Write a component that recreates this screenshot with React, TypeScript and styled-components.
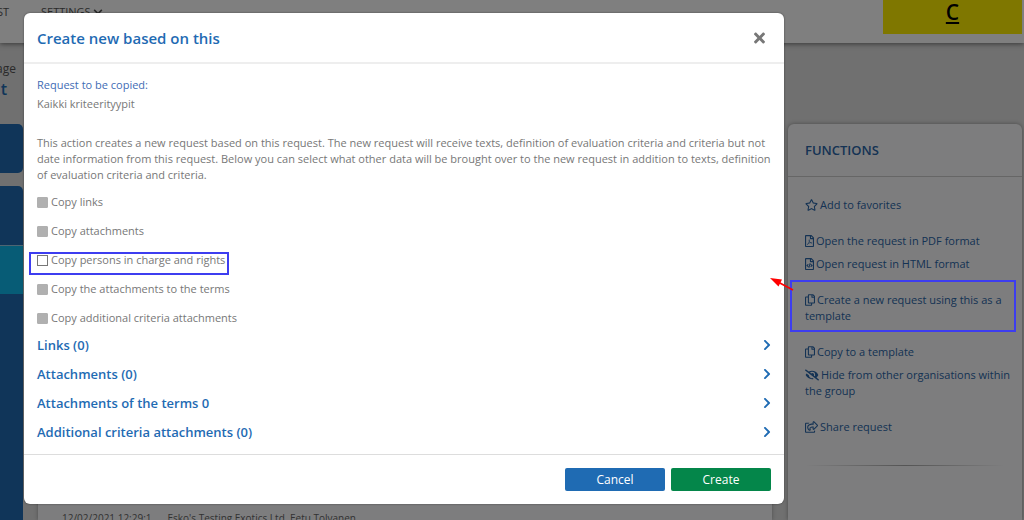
import React from 'react';
import styled, { createGlobalStyle } from 'styled-components';
import {
  FaRegStar,
  FaRegFilePdf,
  FaRegFileCode,
  FaRegCopy,
  FaEyeSlash,
  FaRegShareSquare,
  FaChevronRight,
  FaChevronDown,
  FaTimes,
} from 'react-icons/fa';

const GlobalStyle = createGlobalStyle`
  * { box-sizing: border-box; }
  body {
    margin: 0;
    background: #e0e0e0;
    font-family: "Open Sans", "Noto Sans", sans-serif;
    font-size: 11px;
    line-height: 16px;
    color: #777;
  }
  button, input { font: inherit; }
  a { color: inherit; text-decoration: none; }
  h1, h2, h3, p, ul { margin: 0; padding: 0; }
  ul { list-style: none; }
`;

const Page = styled.div`
  position: relative;
  height: 100vh;
  overflow: hidden;
  display: flex;
  flex-direction: column;
`;

const TopBar = styled.header`
  display: flex;
  justify-content: space-between;
  align-items: flex-start;
  flex: none;
  height: 43px;
  padding-right: 2px;
  background: #fff;
  box-shadow: 0 1px 5px rgba(0, 0, 0, 0.5);
`;

const Nav = styled.nav`
  display: flex;
  gap: 32px;
  padding-top: 4px;
  color: #555;
`;

const NavLink = styled.a`
  display: flex;
  align-items: center;
  gap: 2px;
`;

const ClippedLink = styled(NavLink)`
  width: 9px;
  justify-content: flex-end;
`;

const Logo = styled.a`
  width: 139px;
  height: 34px;
  background: #ffee00;
  color: #000;
  text-align: center;
  font-size: 21px;
  font-weight: 600;
  line-height: 24px;
  text-decoration: underline;
`;

const Columns = styled.div`
  display: flex;
  align-items: stretch;
  flex: 1;
  min-height: 0;
  padding-right: 2px;
`;

const Side = styled.aside`
  flex: none;
  width: 23px;
  display: flex;
  flex-direction: column;
  overflow: hidden;
`;

const SideHeading = styled.div`
  display: flex;
  flex-direction: column;
  align-items: flex-end;
  height: 81px;
  padding: 18px 7px 0 0;
  font-size: 12px;
  color: #555;
`;

const SideTitle = styled.strong`
  padding-right: 9px;
  font-size: 16px;
  font-weight: 600;
  line-height: 24px;
  color: #1f6bb3;
`;

const SideBox = styled.div`
  height: 49px;
  margin-bottom: 13px;
  border-radius: 0 5px 5px 0;
  background: #206bb3;
`;

const SideMenu = styled.div`
  flex: 1;
  border-radius: 0 5px 0 0;
  background: #206bb3;
  padding-top: 59px;
`;

const SideActive = styled.div`
  height: 49px;
  background: #0fb8ec;
  border-top: 1px solid #9ccbe4;
`;

const Main = styled.main`
  flex: 1;
  min-width: 0;
  display: flex;
  align-items: flex-end;
  margin: 0 16px 0 15px;
  padding: 0 24px;
  background: #fbfbfd;
  box-shadow: 0 0 4px rgba(0, 0, 0, 0.3);
`;

const LogRow = styled.div`
  display: flex;
  gap: 16px;
  height: 10px;
  font-size: 10px;
  color: #666;
`;

const Functions = styled.aside`
  flex: none;
  width: 234px;
  margin-top: 81px;
  border-radius: 6px 6px 0 0;
  background: #fbfbfd;
  box-shadow: 0 0 4px rgba(0, 0, 0, 0.35);
  color: #2a66a8;
`;

const FunctionsTitle = styled.h2`
  padding: 17px;
  height: 53px;
  font-size: 13px;
  font-weight: 600;
  line-height: 18px;
  border-bottom: 1px solid #ccc;
`;

const FunctionList = styled.ul`
  display: flex;
  flex-direction: column;
  gap: 7px;
  padding: 20px 8px 30px 17px;
`;

const FunctionItem = styled.li<{ $spaced?: boolean }>`
  position: relative;
  margin-bottom: ${(p) => (p.$spaced ? 13 : 0)}px;
`;

const FunctionIcon = styled.span<{ $width: number }>`
  margin-right: 2px;
  svg {
    width: ${(p) => p.$width}px;
    height: 12px;
    vertical-align: -2px;
  }
`;

const Separator = styled.hr`
  height: 1px;
  margin: 0 17px;
  border: 0;
  background: linear-gradient(to right, transparent, #aaa, transparent);
`;

const Marker = styled.span`
  position: absolute;
  z-index: 3;
  border: 2px solid #3d3df0;
  pointer-events: none;
`;

const FunctionMarker = styled(Marker)`
  inset: -12px -2px -8px -15px;
`;

const OptionMarker = styled(Marker)`
  inset: 1px -4px -3px -8px;
`;

const Arrow = styled.svg`
  position: absolute;
  z-index: 3;
  left: -35px;
  top: -14px;
`;

const Backdrop = styled.div`
  position: absolute;
  inset: 0;
  z-index: 1;
  padding: 13px 240px 0 24px;
  background: rgba(0, 0, 0, 0.5);
`;

const Dialog = styled.section`
  border-radius: 6px;
  background: #fff;
  box-shadow: 0 0 2px rgba(0, 0, 0, 0.5);
`;

const DialogHeader = styled.header`
  display: flex;
  align-items: center;
  justify-content: space-between;
  height: 51px;
  padding: 0 19px 0 13px;
  border-bottom: 2px solid #eee;
`;

const DialogTitle = styled.h1`
  font-size: 15px;
  font-weight: 600;
  line-height: 18px;
  color: #1f6bb3;
`;

const CloseButton = styled.button`
  display: flex;
  padding: 0;
  border: 0;
  background: none;
  color: #777;
  svg { width: 11px; height: 16px; }
`;

const DialogBody = styled.div`
  padding: 13px 13px 8px;
`;

const SourceLabel = styled.h3`
  margin-bottom: 3px;
  font-size: 11px;
  font-weight: 400;
  color: #3f6cb5;
`;

const Intro = styled.p`
  margin: 23px 0 10px;
`;

const Options = styled.ul`
  display: flex;
  flex-direction: column;
  align-items: flex-start;
  gap: 8px;
`;

const Option = styled.li`
  position: relative;
  height: 21px;
`;

const OptionLabel = styled.label`
  display: flex;
  align-items: center;
  gap: 3px;
  height: 18px;
`;

const CheckBox = styled.input`
  appearance: none;
  width: 11px;
  height: 11px;
  margin: 0;
  border: 1px solid #777;
  background: #fff;
  &:disabled {
    border-color: #b0b0b0;
    background: #b0b0b0;
    border-radius: 1px;
  }
`;

const SectionButton = styled.button`
  display: flex;
  align-items: center;
  justify-content: space-between;
  width: 100%;
  height: 29px;
  padding: 0;
  border: 0;
  background: none;
  font-size: 13px;
  font-weight: 600;
  color: #1f6bb3;
  svg { width: 8px; height: 12px; }
`;

const DialogFooter = styled.footer`
  display: flex;
  justify-content: flex-end;
  gap: 6px;
  height: 50px;
  padding: 13px;
  border-top: 1px solid #ddd;
`;

const ActionButton = styled.button<{ $tone: string }>`
  width: 100px;
  height: 23px;
  padding: 0;
  border: 0;
  border-radius: 2px;
  background: ${(p) => p.$tone};
  color: #fff;
  font-size: 12px;
`;

const options = [
  { id: 'links', label: 'Copy links' },
  { id: 'attachments', label: 'Copy attachments' },
  { id: 'persons', label: 'Copy persons in charge and rights', open: true },
  { id: 'terms', label: 'Copy the attachments to the terms' },
  { id: 'criteria', label: 'Copy additional criteria attachments' },
];

const sections = [
  'Links (0)',
  'Attachments (0)',
  'Attachments of the terms 0',
  'Additional criteria attachments (0)',
];

const functions = [
  { icon: FaRegStar, width: 13, label: 'Add to favorites', spaced: true },
  { icon: FaRegFilePdf, width: 9, label: 'Open the request in PDF format' },
  { icon: FaRegFileCode, width: 9, label: 'Open request in HTML format', spaced: true },
  { icon: FaRegCopy, width: 10, label: 'Create a new request using this as a template', spaced: true, marked: true },
  { icon: FaRegCopy, width: 10, label: 'Copy to a template' },
  { icon: FaEyeSlash, width: 14, label: 'Hide from other organisations within the group', spaced: true },
  { icon: FaRegShareSquare, width: 13, label: 'Share request' },
];

export default function App() {
  return (
    <Page>
      <GlobalStyle />
      <TopBar>
        <Nav>
          <ClippedLink href="#list">ST</ClippedLink>
          <NavLink href="#settings">
            SETTINGS <FaChevronDown size={10} />
          </NavLink>
        </Nav>
        <Logo href="#home">C</Logo>
      </TopBar>
      <Columns>
        <Side>
          <SideHeading>
            <span>age</span>
            <SideTitle>t</SideTitle>
          </SideHeading>
          <SideBox />
          <SideMenu>
            <SideActive />
          </SideMenu>
        </Side>
        <Main>
          <LogRow>
            <span>12/02/2021 12:29:1</span>
            <span>Esko's Testing Exotics Ltd, Eetu Tolvanen</span>
          </LogRow>
        </Main>
        <Functions>
          <FunctionsTitle>FUNCTIONS</FunctionsTitle>
          <FunctionList>
            {functions.map(({ icon: Icon, width, label, spaced, marked }) => (
              <FunctionItem key={label} $spaced={spaced}>
                <a href="#function">
                  <FunctionIcon $width={width}>
                    <Icon />
                  </FunctionIcon>
                  {label}
                </a>
                {marked && (
                  <>
                    <FunctionMarker />
                    <Arrow width="25" height="16" viewBox="0 0 25 16">
                      <path d="M8 4L23 12" stroke="#f00" strokeWidth="1.6" />
                      <path d="M0 0L12 1.5L8.500 8.500Z" fill="#f00" />
                    </Arrow>
                  </>
                )}
              </FunctionItem>
            ))}
          </FunctionList>
          <Separator />
        </Functions>
      </Columns>
      <Backdrop>
        <Dialog role="dialog" aria-labelledby="dialog-title">
          <DialogHeader>
            <DialogTitle id="dialog-title">Create new based on this</DialogTitle>
            <CloseButton aria-label="Close">
              <FaTimes />
            </CloseButton>
          </DialogHeader>
          <DialogBody>
            <SourceLabel>Request to be copied:</SourceLabel>
            <p>Kaikki kriteerityypit</p>
            <Intro>
              This action creates a new request based on this request. The new request will receive texts,
              definition of evaluation criteria and criteria but not date information from this request. Below you
              can select what other data will be brought over to the new request in addition to texts, definition of
              evaluation criteria and criteria.
            </Intro>
            <Options>
              {options.map((o) => (
                <Option key={o.id}>
                  <OptionLabel htmlFor={o.id}>
                    <CheckBox type="checkbox" id={o.id} disabled={!o.open} />
                    {o.label}
                  </OptionLabel>
                  {o.open && <OptionMarker />}
                </Option>
              ))}
            </Options>
            {sections.map((s) => (
              <SectionButton key={s}>
                {s}
                <FaChevronRight />
              </SectionButton>
            ))}
          </DialogBody>
          <DialogFooter>
            <ActionButton $tone="#1f6bb3">Cancel</ActionButton>
            <ActionButton $tone="#04864a">Create</ActionButton>
          </DialogFooter>
        </Dialog>
      </Backdrop>
    </Page>
  );
}
